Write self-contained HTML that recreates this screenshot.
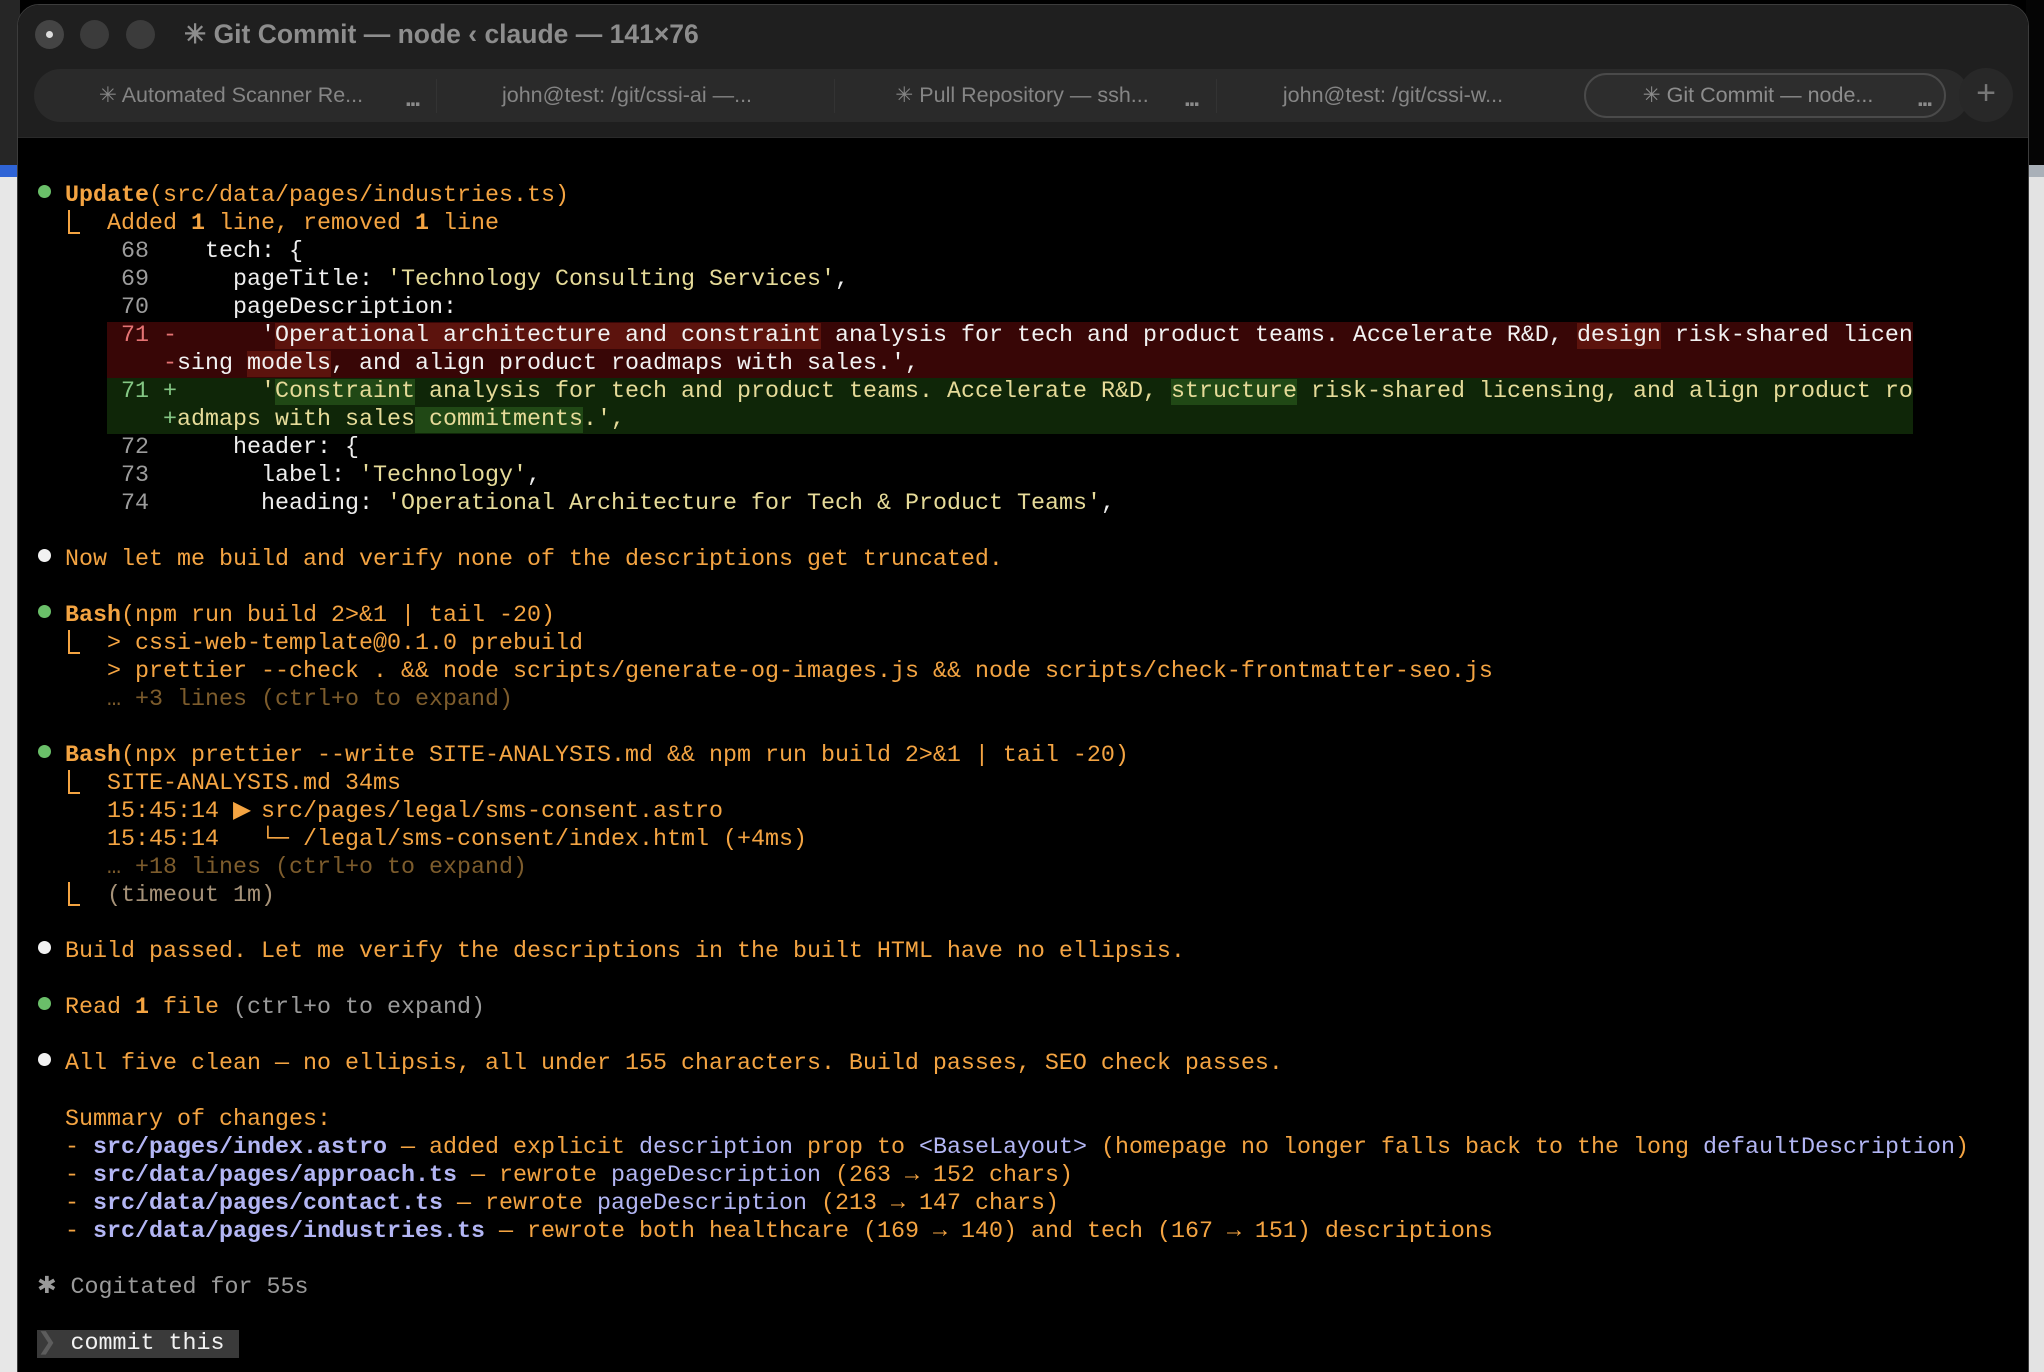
<!DOCTYPE html>
<html><head><meta charset="utf-8">
<style>
*{margin:0;padding:0;box-sizing:border-box}
html,body{width:2044px;height:1372px;overflow:hidden;background:#000}
body{position:relative;font-family:"Liberation Sans",sans-serif}
.bgl{position:absolute;left:0;top:0;width:20px;height:1372px;background:#e7e7e7}
.bgl .t{position:absolute;left:0;top:0;width:20px;height:165px;background:#262626}
.bgl .bl{position:absolute;left:0;top:165px;width:20px;height:12px;background:#2f64d6}
.bgr{position:absolute;left:2026px;top:0;width:18px;height:1372px;background:#e3e3e3}
.bgr .t{position:absolute;left:0;top:0;width:18px;height:165px;background:#050505}
.bgr .g{position:absolute;left:0;top:165px;width:18px;height:12px;background:#a9b0b8}
.win{position:absolute;left:17px;top:4px;width:2012px;height:1380px;background:#000;border-radius:22px 22px 0 0;overflow:hidden;border:1px solid #3c3c3c}
.tb{position:absolute;left:0;top:0;width:100%;height:133px;background:#1f1f1f;border-bottom:1px solid #2a2a2a}
.tl{position:absolute;top:15px;width:29px;height:29px;border-radius:50%;background:#3b3b3b}
.tl.a{background:#444}
.tl.a:after{content:"";position:absolute;left:11px;top:11px;width:7px;height:7px;border-radius:50%;background:#ddd}
.title{position:absolute;left:166px;top:14px;font-weight:bold;font-size:26.5px;color:#8d8d8d;white-space:nowrap}
.tabs{position:absolute;left:16px;top:64px;width:1935px;height:53px;background:#2a2a2a;border-radius:27px}
.tab{position:absolute;top:0;height:53px;line-height:53px;font-size:21.5px;color:#858585;white-space:nowrap;text-align:center}
.dots{position:absolute;top:16px;width:24px;text-align:center;font-size:24px;color:#8a8a8a;font-weight:bold;letter-spacing:-2px}
.sep{position:absolute;top:10px;width:1px;height:34px;background:#333}
.act{position:absolute;left:1550px;top:4px;width:362px;height:45px;border:2px solid #4a4a4a;border-radius:23px;background:#2d2d2d}
.plus{position:absolute;left:1941px;top:63px;width:54px;height:54px;border-radius:50%;background:#282828;color:#777;font-size:34px;line-height:50px;text-align:center;font-weight:300}
pre{position:absolute;left:19px;top:177px;font-family:"Liberation Mono",monospace;font-size:23.33px;line-height:28px;color:#f4a442;white-space:pre}
.o{color:#f4a442}.b{font-weight:bold}
.w{color:#eeeeee}.s{color:#e6db99}.n{color:#9c9c9c}
.lv{color:#b3b6f4}.dim{color:#7d5c2c}.gr{color:#9a9a9a}.tm{color:#a69278}
.bul{display:inline-block;width:1ch;position:relative}
.bul:before{content:"";position:absolute;left:1px;top:-16px;width:13px;height:13px;border-radius:50%;background:#6abf69}
.bul.wh:before{background:#f2f2f2}
.el{display:inline-block;width:1ch;position:relative}
.el:before{content:"";position:absolute;left:3px;top:-19px;width:10px;height:22px;border-left:2px solid #f4a442;border-bottom:2px solid #f4a442}
.c{display:inline-block;width:1ch;text-align:center}
.rd{display:inline-block;width:129ch;background:#380606;color:#f2f2f2}
.rh{background:#5c130d}
.gn{display:inline-block;width:129ch;background:#0f2608;color:#e6db99}
.gh{background:#204815}
.rn{color:#e57373}.gnn{color:#84c784}
.cm{display:inline-block;background:#3a3a3a;padding-right:14px;color:#f2f2f2}
.cm .ch{color:#5d5d5d}
</style></head><body>
<div class="bgl"><div class="t"></div><div class="bl"></div></div>
<div class="bgr"><div class="t"></div><div class="g"></div></div>
<div class="win">
 <div class="tb">
  <div class="tl a" style="left:17px"></div>
  <div class="tl" style="left:62px"></div>
  <div class="tl" style="left:108px"></div>
  <div class="title">✳ Git Commit — node ‹ claude — 141×76</div>
  <div class="tabs">
   <div class="tab" style="left:47px;width:300px">✳ Automated Scanner Re...</div>
   <div class="dots" style="left:366px">...</div>
   <div class="sep" style="left:402px"></div>
   <div class="tab" style="left:423px;width:340px">john@test: /git/cssi-ai —...</div>
   <div class="sep" style="left:800px"></div>
   <div class="tab" style="left:823px;width:330px">✳ Pull Repository — ssh...</div>
   <div class="dots" style="left:1145px">...</div>
   <div class="sep" style="left:1182px"></div>
   <div class="tab" style="left:1199px;width:320px">john@test: /git/cssi-w...</div>
   <div class="act"></div>
   <div class="tab" style="left:1574px;width:300px;color:#8d8d8d">✳ Git Commit — node...</div>
   <div class="dots" style="left:1878px">...</div>
  </div>
  <div class="plus">+</div>
 </div>
<pre><span class="bul"></span> <span class="b">Update</span>(src/data/pages/industries.ts)
  <span class="el"></span>  Added <span class="b">1</span> line, removed <span class="b">1</span> line
      <span class="n">68</span>    <span class="w">tech: {</span>
      <span class="n">69</span>      <span class="w">pageTitle: </span><span class="s">'Technology Consulting Services'</span><span class="w">,</span>
      <span class="n">70</span>      <span class="w">pageDescription:</span>
     <span class="rd"> <span class="rn">71 -</span>      '<span class="rh">Operational architecture and constraint</span> analysis for tech and product teams. Accelerate R&amp;D, <span class="rh">design</span> risk-shared licen</span>
     <span class="rd">    <span class="rn">-</span>sing <span class="rh">models</span>, and align product roadmaps with sales.',</span>
     <span class="gn"> <span class="gnn">71 +</span>      '<span class="gh">Constraint</span> analysis for tech and product teams. Accelerate R&amp;D, <span class="gh">structure</span> risk-shared licensing, and align product ro</span>
     <span class="gn">    <span class="gnn">+</span>admaps with sales<span class="gh"> commitments</span>.',</span>
      <span class="n">72</span>      <span class="w">header: {</span>
      <span class="n">73</span>        <span class="w">label: </span><span class="s">'Technology'</span><span class="w">,</span>
      <span class="n">74</span>        <span class="w">heading: </span><span class="s">'Operational Architecture for Tech &amp; Product Teams'</span><span class="w">,</span>

<span class="bul wh"></span> Now let me build and verify none of the descriptions get truncated.

<span class="bul"></span> <span class="b">Bash</span>(npm run build 2&gt;&amp;1 | tail -20)
  <span class="el"></span>  &gt; cssi-web-template@0.1.0 prebuild
     &gt; prettier --check . &amp;&amp; node scripts/generate-og-images.js &amp;&amp; node scripts/check-frontmatter-seo.js
     <span class="dim">… +3 lines (ctrl+o to expand)</span>

<span class="bul"></span> <span class="b">Bash</span>(npx prettier --write SITE-ANALYSIS.md &amp;&amp; npm run build 2&gt;&amp;1 | tail -20)
  <span class="el"></span>  SITE-ANALYSIS.md 34ms
     15:45:14 <span class="c">▶</span> src/pages/legal/sms-consent.astro
     15:45:14   <span class="c">└</span><span class="c">─</span> /legal/sms-consent/index.html (+4ms)
     <span class="dim">… +18 lines (ctrl+o to expand)</span>
  <span class="el"></span>  <span class="tm">(timeout 1m)</span>

<span class="bul wh"></span> Build passed. Let me verify the descriptions in the built HTML have no ellipsis.

<span class="bul"></span> Read <span class="b">1</span> file <span class="gr">(ctrl+o to expand)</span>

<span class="bul wh"></span> All five clean — no ellipsis, all under 155 characters. Build passes, SEO check passes.

  Summary of changes:
  - <span class="lv b">src/pages/index.astro</span> — added explicit <span class="lv">description</span> prop to <span class="lv">&lt;BaseLayout&gt;</span> (homepage no longer falls back to the long <span class="lv">defaultDescription</span>)
  - <span class="lv b">src/data/pages/approach.ts</span> — rewrote <span class="lv">pageDescription</span> (263 <span class="c">→</span> 152 chars)
  - <span class="lv b">src/data/pages/contact.ts</span> — rewrote <span class="lv">pageDescription</span> (213 <span class="c">→</span> 147 chars)
  - <span class="lv b">src/data/pages/industries.ts</span> — rewrote both healthcare (169 <span class="c">→</span> 140) and tech (167 <span class="c">→</span> 151) descriptions

<span class="gr">✱ Cogitated for 55s</span>

<span class="cm"><span class="ch">❯</span> commit this</span></pre>
</div>
</body></html>
